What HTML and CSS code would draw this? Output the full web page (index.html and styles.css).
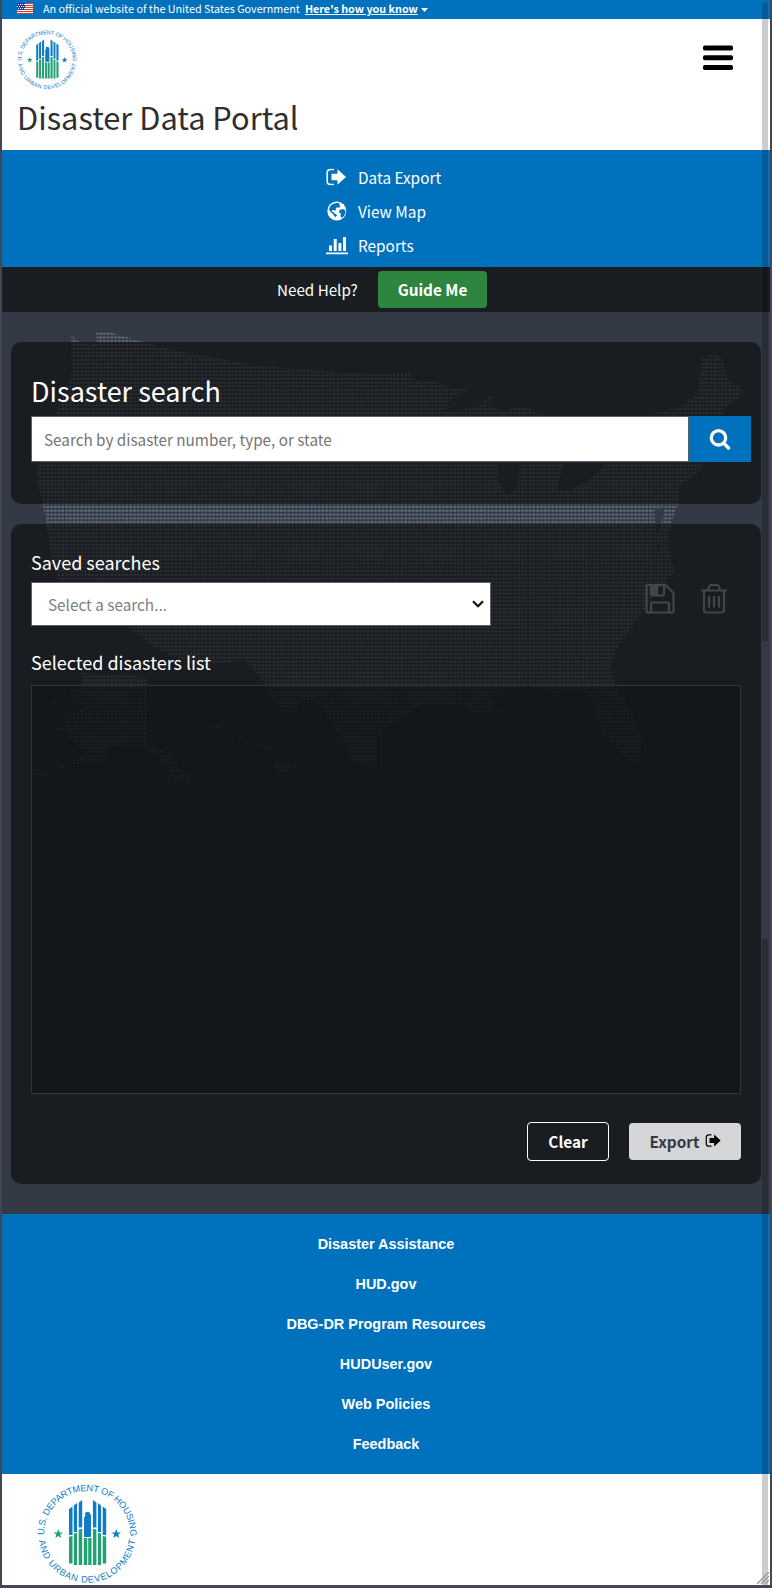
FILE: index.html
```html
<!DOCTYPE html>
<html lang="en">
<head>
<meta charset="utf-8">
<title>Disaster Data Portal</title>
<link rel="stylesheet" href="styles.css">
</head>
<body>
<svg class="defs" width="0" height="0" aria-hidden="true">
  <defs>
    <path id="arc-top" d="M7.1 53 A43 43 0 1 1 92.9 53"/>
    <path id="arc-bottom" d="M1.4 53 A48.7 48.7 0 0 0 98.6 53"/>
    <path id="star" d="M0-5 1.2-1.6H4.8L1.9.6 3 4.1 0 2-3 4.1-1.9.6-4.8-1.6H-1.2Z"/>
    <symbol id="seal" viewBox="0 0 100 100">
      <g class="seal-text">
        <text><textPath href="#arc-top" startOffset="2" textLength="138" lengthAdjust="spacing">U.S. DEPARTMENT OF HOUSING</textPath></text>
        <text><textPath href="#arc-bottom" startOffset="3.500" textLength="140" lengthAdjust="spacing">AND URBAN DEVELOPMENT</textPath></text>
      </g>
      <path fill="#0e7dc6" d="M32 25l3.500-2.400V51H32zM36.800 21.500L40 19v29h-3.200zM41.700 18.400l3.500-2.400v27.500h-3.500zM55.900 16l3.500 2.400v25.100h-3.500zM60.900 19l3.200 2.400V48h-3.200zM65.700 22.600l3.500 2.400v26h-3.500zM47 53V34l1.500-3-1-1.500 2-1.500 3 .2 1.500 3.300V53z"/>
      <path fill="#23a173" d="M32 52.800l3.500-.8v27.500H32zM36.800 49.500l3.200-.8V81h-3.200zM41.700 45.500l3.500-.8V81h-3.500zM46.800 54h3.400v27h-3.400zM51.200 54h3.300v27h-3.300zM55.900 44.700l3.500.8V81h-3.500zM60.900 48.700l3.200.8V81h-3.200zM65.700 52l3.500.8v26.700h-3.500z"/>
      <use href="#star" x="21.300" y="50" fill="#23a173"/>
      <use href="#star" x="79.300" y="50" fill="#0e7dc6"/>
    </symbol>
    <symbol id="export-icon" viewBox="0 0 20 17">
      <path d="M8 1H4.500Q1.200 1 1.200 4.300v8.400Q1.200 16 4.500 16H8" fill="none" stroke="currentColor" stroke-width="1.600"/>
      <path d="M5.500 5.200h6V.8L20 8.500l-8.500 7.700v-4.400h-6z" fill="currentColor"/>
    </symbol>
  </defs>
</svg>
<div class="page">
  <div class="banner">
    <svg class="flag" viewBox="0 0 16 11">
      <path fill="#fff" d="M0 0h16v11H0z"/>
      <path stroke="#db3e1f" d="M0 .5h16M0 2.500h16M0 4.500h16M0 6.500h16M0 8.500h16M0 10.500h16"/>
      <path fill="#1e33b1" d="M0 0h8v7H0z"/>
      <path stroke="#fff" stroke-dasharray="1 1" d="M1 1.500h7M0 3.500h8M1 5.500h7"/>
    </svg>
    <span class="banner-text">An official website of the United States Government</span>
    <a class="banner-link">Here's how you know</a>
    <svg class="caret" viewBox="0 0 7 4"><path fill="#fff" d="M0 0h7L3.500 4z"/></svg>
  </div>
  <header class="header">
    <div class="header-row">
      <svg class="seal-small"><use href="#seal"/></svg>
      <svg class="menu" viewBox="0 0 30 26"><g fill="#000"><rect y=".5" width="30" height="5" rx="1.800"/><rect y="10.200" width="30" height="5" rx="1.800"/><rect y="20" width="30" height="5" rx="1.800"/></g></svg>
    </div>
    <h1 class="site-title">Disaster Data Portal</h1>
  </header>
  <nav class="nav">
    <a class="nav-item"><svg class="nav-icon" viewBox="0 0 22 20"><use href="#export-icon" x="0" y="1.500" width="20" height="17"/></svg>Data Export</a>
    <a class="nav-item"><svg class="nav-icon" viewBox="0 0 22 20"><circle cx="10.800" cy="10" r="9.500" fill="#fff"/><path fill="#0071bc" d="M8.500 2.500l3-.8 2.500 1-1 1.500 1.500 1-1.500 1.500-2-.5-1.500 1.500 1 1.300-2 .5-2-.5-1 1.500 2 .8 1 1.300-1.500.5L4.500 11 3 8l1-2.500 2-2zM13.500 9l3-1 2.500 1 .5 2.500-1.500 3.500-2.500 2-1-2.500.5-2-2-1zM7 12.500l3 .5 1 1.500-1.500 1.500-1.500-1z"/></svg>View Map</a>
    <a class="nav-item"><svg class="nav-icon" viewBox="0 0 22 20"><path fill="#fff" d="M3 10.500h3V16H3zM7.700 4h3v12h-3zM12.400 8h3v8h-3zM17 2h3v14h-3zM0 17.500h22v1.700H0z"/></svg>Reports</a>
  </nav>
  <div class="help">
    <span class="help-label">Need Help?</span>
    <button class="btn btn-guide">Guide Me</button>
  </div>
  <main class="main">
    <svg class="map" viewBox="2 312 768 902">
      <defs>
        <pattern id="dots" x="0.900" y="0.400" width="3.768" height="3.768" patternUnits="userSpaceOnUse"><rect x=".4" y=".6" width="2.500" height="2.100" rx=".5" fill="#67717e"/></pattern>
      </defs>
      <path id="land" fill="url(#dots)" fill-rule="evenodd" d="M71 335L78 341 90 345 97 343 96 331 105 331 130 338 165 348 215 358 260 366 320 371 380 374 407 373 409 369 412 380 435 381 450 388 472 388 455 396 443 411 457 411 480 405 488 397 494 395 486 405 505 411 515 407 528 406 540 415 580 440 648 415 680 407 690 400 698 395 700 370 703 358 715 354 722 358 727 379 742 388 740 398 728 405 722 415 705 463 695 475 680 486 678 505 672 520 668 540 670 555 674 570 668 580 655 595 640 615 630 630 617 648 610 665 615 685 628 705 635 720 641 740 641 755 637 763 629 763 617 750 603 732 597 718 597 705 585 692 570 689 557 695 548 690 530 687 500 689 492 697 495 708 501 711 490 713 475 714 465 706 440 704 420 706 405 717 385 727 377 737V770L365 766 350 760 346 745 333 725 320 705 305 699 292 712 280 708 270 698 265 683 245 660 220 664 200 665 170 655 150 645 127 626 95 620 60 582 52 565 49 540 45 515 41 495 37 485V463L55 415 68 385 72 370ZM498 463L520 463 519 480 514 492 505 493 498 480ZM565 463L608 463 585 483 570 491 556 488ZM654 511L665 506 660 530 656 535 661 552 658 550Z
      M82 673L130 675 147 678V745L155 748 170 755 180 770 190 773 190 782 175 782 165 765 150 750 130 745 110 747 100 762 97 766 90 760 75 765 55 770 52 769 75 762 85 755 80 747 70 740 65 725 65 715 78 712 85 705 72 703 70 690 82 688ZM52 700h6v5h-6ZM56 728h8v4h-8ZM30 771h14v4H30ZM206 726h6v3h-6ZM213 723h7v5h-7ZM237 732L247 740 238 739ZM255 742L272 748 271 752 256 746ZM275 758L292 767 277 778Z"/>
    </svg>
    <section class="card search-card">
      <h2 class="search-title">Disaster search</h2>
      <form class="search-row">
        <input class="search-input" type="text" placeholder="Search by disaster number, type, or state">
        <button class="search-btn" type="button"><svg width="22" height="22" viewBox="0 0 22 22"><circle cx="9.500" cy="9.800" r="7.200" fill="none" stroke="#fff" stroke-width="3.300"/><path d="M15 15.500l4.500 4.500" stroke="#fff" stroke-width="3.400" stroke-linecap="round"/></svg></button>
      </form>
    </section>
    <section class="card list-card">
      <div class="label">Saved searches</div>
      <div class="saved-row">
        <div class="select">Select a search...<svg class="chevron" viewBox="0 0 12 8"><path d="M1 1.200l5 5 5-5" fill="none" stroke="#111" stroke-width="2.200"/></svg></div>
        <div class="tools">
          <svg width="30" height="30" viewBox="0 0 30 30" fill="none" stroke="#424549" stroke-width="2.200"><path d="M1.500 2.500Q1.500 1 3 1H20.500l8 8V27q0 1.500-1.500 1.500H3q-1.500 0-1.500-1.500ZM6 28V20Q6 18.500 7.500 18.500h15q1.500 0 1.500 1.500V28M6 1v8.500q0 2 2 2h9q2 0 2-2V1"/><path d="M7 2h5v9H7z" fill="#424549"/></svg>
          <svg width="28" height="30" viewBox="0 0 28 30" fill="none" stroke="#424549" stroke-width="2.200"><path d="M1 6.500h26M8 6q1-5 3.500-5h5q2.500 0 3.500 5M4 7v19q0 2.500 2.500 2.500h15q2.500 0 2.500-2.500V7M9 12v11.500M14 12v11.500M19 12v11.500"/></svg>
        </div>
      </div>
      <div class="label label-list">Selected disasters list</div>
      <div class="list-box"></div>
      <div class="actions">
        <button class="btn btn-clear">Clear</button>
        <button class="btn btn-export">Export<svg class="export-mark"><use href="#export-icon"/></svg></button>
      </div>
    </section>
  </main>
  <div class="footer-links">
    <a>Disaster Assistance</a>
    <a>HUD.gov</a>
    <a>DBG-DR Program Resources</a>
    <a>HUDUser.gov</a>
    <a>Web Policies</a>
    <a>Feedback</a>
  </div>
  <footer class="footer">
    <svg class="seal-large"><use href="#seal"/></svg>
  </footer>
  <div class="scroll scroll-top"></div>
  <div class="scroll scroll-bottom"></div>
  <svg class="grip" viewBox="0 0 12 12"><path d="M0 12L12 0M4 12l8-8M8 12l4-4" stroke="#999" stroke-width="1.300"/></svg>
</div>
</body>
</html>
```

FILE: styles.css
```css
* { box-sizing: border-box; }
body {
  margin: 0;
  font-family: "Noto Sans CJK SC", "Open Sans", sans-serif;
  color: #fff;
  background: #434653;
}
h1, h2 { margin: 0; font-weight: 400; }
button, input { font-family: inherit; }
.defs { position: absolute; }
.page {
  position: relative;
  height: 1588px;
  border: solid #434653;
  border-width: 0 2px 3px;
  display: flex;
  flex-direction: column;
  overflow: hidden;
}
.banner {
  height: 19px;
  background: #0071bc;
  display: flex;
  align-items: center;
  padding: 0 0 2px 15px;
  font-size: 10.780px;
  line-height: 17px;
  white-space: nowrap;
}
.flag { width: 16px; height: 11px; margin-right: 10px; }
.banner-link { font-weight: 700; text-decoration: underline; margin-left: 5px; }
.caret { width: 7px; height: 4px; margin: 2px 0 0 3px; }
.header {
  height: 131px;
  background: #fff;
  padding: 11px 0 0 15px;
}
.header-row { display: flex; justify-content: space-between; height: 60px; }
.seal-small { width: 60px; height: 60px; }
.menu { width: 30px; height: 26px; margin: 15px 37px 0 0; }
.site-title { font-size: 30.800px; line-height: 40px; margin-top: 7px; color: #2e2e2e; }
.seal-text { font-family: "Liberation Sans", Arial, sans-serif; font-size: 9.200px; fill: #0e7dc6; }
.nav {
  height: 117px;
  background: #0071bc;
  display: flex;
  flex-direction: column;
  padding: 10px 0 0 324px;
}
.nav-item { display: flex; align-items: center; height: 34px; font-size: 15.350px; }
.nav-icon { width: 22px; height: 20px; margin-right: 10px; }
.help {
  height: 45px;
  background: #1a1d21;
  display: flex;
  align-items: center;
  padding-left: 275px;
}
.help-label { font-size: 15.200px; width: 101px; padding-bottom: 2px; }
.btn {
  border: 0;
  border-radius: 4px;
  height: 37px;
  padding: 0 0 2px;
  font-size: 15.350px;
  font-weight: 700;
  color: #fff;
  display: flex;
  align-items: center;
  justify-content: center;
}
.btn-guide { width: 109px; background: #2e8540; }
.main {
  position: relative;
  height: 902px;
  background: #333a46;
  padding: 30px 9px;
  display: flex;
  flex-direction: column;
  gap: 20px;
}
.map { position: absolute; left: 0; top: 0; width: 768px; height: 902px; }
.card {
  position: relative;
  width: 750px;
  background: rgba(12, 13, 13, 0.650);
  border-radius: 10px;
  padding: 0 20px;
}
.search-card { height: 162px; padding: 29px 10px 0 20px; }
.search-title { font-size: 27px; line-height: 40px; height: 45px; }
.search-row { display: flex; height: 46px; margin: 0; }
.search-input {
  flex: 1;
  border: 1px solid #5b616b;
  border-radius: 0;
  padding: 0 12px 1px;
  font-size: 15.250px;
  background: #fff;
}
.search-input::placeholder { color: #757575; opacity: 1; }
.search-btn {
  width: 62px;
  border: 0;
  background: #0071bc;
  display: flex;
  align-items: center;
  justify-content: center;
}
.list-card { height: 660px; padding-top: 23px; }
.label { font-size: 18px; line-height: 30px; height: 35px; }
.saved-row { display: flex; justify-content: space-between; height: 44px; }
.select {
  width: 460px;
  height: 44px;
  background: #fff;
  border: 1px solid #5b616b;
  color: #808080;
  font-size: 15.300px;
  display: flex;
  align-items: center;
  justify-content: space-between;
  padding: 0 6px 0 16px;
}
.chevron { width: 12px; height: 8px; }
.tools { display: flex; gap: 25px; margin: 2px 13px 0 0; }
.label-list { margin-top: 21px; height: 38px; }
.list-box { height: 409px; border: 1px solid #333436; background: rgba(14, 17, 20, 0.500); }
.actions { display: flex; justify-content: flex-end; align-items: center; gap: 20px; margin-top: 28px; }
.btn-clear { width: 82px; height: 39px; background: transparent; border: 1px solid #fff; }
.btn-export { width: 112px; background: #d5d6d8; color: #333a46; }
.export-mark { width: 16px; height: 13px; margin-left: 5px; color: #000; }
.footer-links {
  height: 260px;
  background: #0071bc;
  display: flex;
  flex-direction: column;
  align-items: center;
  padding: 10px 0 0;
  font: bold 14.450px/40px "Liberation Sans", Arial, sans-serif;
}
.footer { height: 111px; background: #fff; padding: 10px 0 0 35px; }
.seal-large { width: 100px; height: 100px; }
.scroll { position: absolute; right: 2px; width: 6px; background: rgba(0, 0, 0, 0.200); }
.scroll-top { top: 2px; height: 639px; border-radius: 3px 3px 0 0; }
.scroll-bottom { top: 939px; height: 646px; }
.grip { position: absolute; right: 1px; bottom: 1px; width: 12px; height: 12px; }
```
